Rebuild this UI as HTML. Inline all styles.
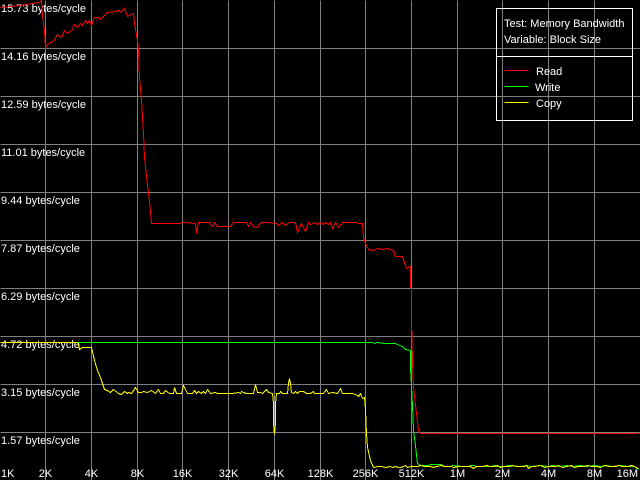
<!DOCTYPE html>
<html>
<head>
<meta charset="utf-8">
<title>Memory Bandwidth</title>
<style>
html,body{margin:0;padding:0;background:#000;width:640px;height:480px;overflow:hidden}
svg{display:block}
text{font-family:"Liberation Sans",Arial,sans-serif;font-size:11px;fill:#fff}
.g line{stroke:#808080;stroke-width:1}
polyline{fill:none;stroke-width:1}
</style>
</head>
<body>
<svg width="640" height="480" viewBox="0 0 640 480" xmlns="http://www.w3.org/2000/svg">
<rect width="640" height="480" fill="#000"/>
<g transform="translate(.5,.5)" shape-rendering="crispEdges">
<g class="g">
<line x1="45" y1="0" x2="45" y2="480"/><line x1="91" y1="0" x2="91" y2="480"/><line x1="137" y1="0" x2="137" y2="480"/><line x1="182" y1="0" x2="182" y2="480"/><line x1="228" y1="0" x2="228" y2="480"/><line x1="274" y1="0" x2="274" y2="480"/><line x1="320" y1="0" x2="320" y2="480"/><line x1="365" y1="0" x2="365" y2="480"/><line x1="411" y1="0" x2="411" y2="480"/><line x1="457" y1="0" x2="457" y2="480"/><line x1="502" y1="0" x2="502" y2="480"/><line x1="548" y1="0" x2="548" y2="480"/><line x1="594" y1="0" x2="594" y2="480"/>
<line x1="0" y1="48" x2="640" y2="48"/><line x1="0" y1="96" x2="640" y2="96"/><line x1="0" y1="144" x2="640" y2="144"/><line x1="0" y1="192" x2="640" y2="192"/><line x1="0" y1="240" x2="640" y2="240"/><line x1="0" y1="288" x2="640" y2="288"/><line x1="0" y1="336" x2="640" y2="336"/><line x1="0" y1="384" x2="640" y2="384"/><line x1="0" y1="432" x2="640" y2="432"/>
</g>
</g>
<g>
<text x="1" y="12">15.73 bytes/cycle</text>
<text x="1" y="60">14.16 bytes/cycle</text>
<text x="1" y="108">12.59 bytes/cycle</text>
<text x="1" y="156">11.01 bytes/cycle</text>
<text x="1" y="204">9.44 bytes/cycle</text>
<text x="1" y="252">7.87 bytes/cycle</text>
<text x="1" y="300">6.29 bytes/cycle</text>
<text x="1" y="348">4.72 bytes/cycle</text>
<text x="1" y="396">3.15 bytes/cycle</text>
<text x="1" y="444">1.57 bytes/cycle</text>
<text x="1" y="477">1K</text>
<text x="45.5" y="477" text-anchor="middle">2K</text>
<text x="91.5" y="477" text-anchor="middle">4K</text>
<text x="137.5" y="477" text-anchor="middle">8K</text>
<text x="182.5" y="477" text-anchor="middle">16K</text>
<text x="228.5" y="477" text-anchor="middle">32K</text>
<text x="274.5" y="477" text-anchor="middle">64K</text>
<text x="320.5" y="477" text-anchor="middle">128K</text>
<text x="365.5" y="477" text-anchor="middle">256K</text>
<text x="411.5" y="477" text-anchor="middle">512K</text>
<text x="457.5" y="477" text-anchor="middle">1M</text>
<text x="502.5" y="477" text-anchor="middle">2M</text>
<text x="548.5" y="477" text-anchor="middle">4M</text>
<text x="594.5" y="477" text-anchor="middle">8M</text>
<text x="638" y="477" text-anchor="end">16M</text>
</g>
<g transform="translate(.5,.5)" shape-rendering="crispEdges">
<polyline stroke="#ff0000" points="0,7 20,5 38,2 40,1 41,0 42,15 44,30 45,47 47,44 50,42 53,41 57,34 61,37 64,30 67,33 72,29 74,24 77,27 80,23 82,25 85,20 87,23 89,20 91,25 94,17 97,17 100,19 104,15 107,12 115,11 118,10 120,12 124,8 127,16 133,13 134,23 137,40 138,50 139,77 141,100 143,133 144,157 147,185 149,200 151,223 179,223 183,222 195,223 196,233 198,222 209,222 212,226 214,222 217,226 227,226 230,226 233,222 246,222 248,226 250,222 253,226 257,227 259,224 261,222 268,222 276,223 278,225 282,222 285,225 289,222 295,222 297,232 301,223 305,231 308,222 310,224 314,222 317,224 320,222 323,224 325,222 328,224 330,222 332,228 335,222 338,227 342,222 356,222 358,223 362,223 363,237 365,243 368,249 373,250 377,248 382,249 387,248 393,250 395,256 402,256 406,268 410,266 410,287 411,288 411,320 412,360 413,387 416,413 418,430 420,433 638,433"/>
<polyline stroke="#00ff00" points="77,342 372,342 374,343 376,342 385,343 395,343 397,344 402,346 405,349 410,350 410,368 411,385 412,405 413,430 415,445 417,463 420,465 428,465 430,464 441,464 443,466 450,466 452,465 462,466 468,466 470,465 474,465 476,466 490,466 494,465 497,466 505,466 508,465 520,466 526,465 530,466 540,465 548,466 552,465 560,466 566,465 572,466 580,465 586,466 594,465 600,466 606,465 612,466 620,465 628,466 634,466 638,469"/>
<polyline stroke="#ffff00" points="0,342 77,342 78,344 79,349 82,347 91,347 94,360 97,370 100,377 104,389 107,390 110,392 113,389 118,393 121,394 124,391 127,393 128,392 131,393 135,387 138,392 141,392 143,391 147,392 151,390 155,393 158,389 160,393 163,393 165,390 169,393 173,393 174,387 176,393 181,393 183,385 186,391 187,393 192,393 194,390 196,393 198,391 201,393 203,391 205,393 207,389 210,393 215,392 217,393 232,393 238,392 240,393 241,391 243,392 246,393 253,393 255,384 257,392 260,392 262,393 266,389 268,392 272,393 273,403 273,423 274,434 275,423 275,403 276,393 279,393 280,391 282,393 287,393 288,383 289,378 290,383 291,392 293,393 295,391 297,393 299,391 303,391 306,393 310,393 313,391 314,393 323,393 326,389 328,393 332,392 337,393 340,388 342,393 352,393 357,395 358,396 360,393 362,398 364,397 365,409 366,433 367,447 370,460 373,467 377,466 381,466 385,467 390,466 392,467 395,466 398,467 400,467 403,466 405,465 407,467 411,466 417,466 420,465 424,466 430,466 433,467 436,466 441,465 444,466 448,466 451,466 453,467 458,466 465,466 470,466 473,468 476,466 482,466 487,465 489,466 494,466 497,465 500,467 503,466 509,466 512,465 516,466 524,466 526,465 528,468 531,466 534,466 540,465 544,467 548,466 555,466 558,465 562,467 566,466 571,465 574,467 578,466 584,466 587,465 591,466 596,466 600,467 604,465 609,466 615,466 618,465 622,466 628,466 631,465 634,466 638,468"/>
</g>
<g transform="translate(.5,.5)" shape-rendering="crispEdges">
<rect x="496" y="8" width="136" height="112" fill="none" stroke="#fff"/>
<line x1="496" y1="56" x2="632" y2="56" stroke="#fff"/>
<line x1="504" y1="70" x2="528" y2="70" stroke="#ff0000"/>
<line x1="504" y1="86" x2="528" y2="86" stroke="#00ff00"/>
<line x1="504" y1="102" x2="528" y2="102" stroke="#ffff00"/>
</g>
<g>
<text x="504" y="27">Test: Memory Bandwidth</text>
<text x="504" y="43">Variable: Block Size</text>
<text x="536" y="75">Read</text>
<text x="535" y="91">Write</text>
<text x="536" y="107">Copy</text>
</g>
</svg>
</body>
</html>
